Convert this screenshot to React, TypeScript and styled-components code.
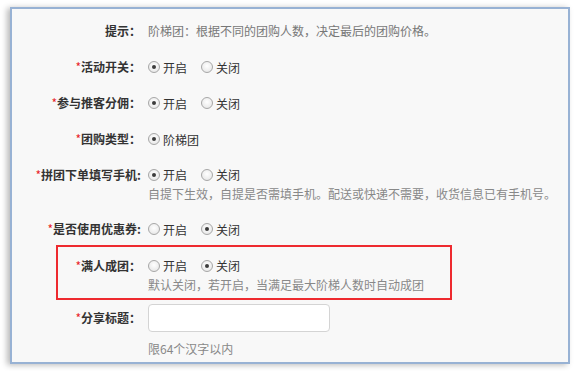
import React from 'react'
import styled, { createGlobalStyle } from 'styled-components'

const GlobalStyle = createGlobalStyle`
  html, body {
    margin: 0;
    padding: 0;
    background: #ffffff;
  }
  body {
    font-family: 'Noto Sans CJK SC', 'Liberation Sans', sans-serif;
    font-size: 12px;
    color: #333;
    text-spacing-trim: space-all;
  }
`

const Page = styled.div`
  padding: 7px 5px 7px 10px;
`

const Panel = styled.div`
  width: 556px;
  background: #f8f8f8;
  border: 2px solid #98b2d4;
  box-shadow: -3px 1px 6px rgba(0, 0, 0, 0.28);
  padding: 12px 0 4px;
  display: flex;
  flex-direction: column;
  gap: 16px;
`

const Row = styled.div<{ $labelWidth?: number }>`
  display: grid;
  grid-template-columns: ${(p) => p.$labelWidth ?? 129}px 1fr;
  column-gap: 7px;
  align-items: start;
`

const Label = styled.div<{ $h?: number }>`
  text-align: right;
  font-weight: 700;
  color: #333;
  line-height: ${(p) => p.$h ?? 20}px;
  white-space: nowrap;
`

const Star = styled.span`
  color: #e8232b;
  font-weight: 400;
`

const Value = styled.div`
  display: flex;
  flex-direction: column;
  line-height: 20px;
`

const Hint = styled.div<{ $gap?: number }>`
  color: #888;
  line-height: 18px;
  margin-top: ${(p) => p.$gap ?? 0}px;
  white-space: nowrap;
`

const Plain = styled.div`
  color: #777;
  line-height: 20px;
`

const Radios = styled.div`
  display: flex;
  align-items: center;
  height: 20px;
  gap: 14px;
`

const Option = styled.label`
  display: flex;
  align-items: center;
  gap: 3px;
  color: #333;
`

const Dot = styled.span<{ $checked?: boolean }>`
  box-sizing: border-box;
  width: 12px;
  height: 12px;
  border-radius: 50%;
  border: 1px solid #a7a7a7;
  background: radial-gradient(circle at 50% 40%, #ffffff 0%, #e2e2e2 100%);
  display: flex;
  align-items: center;
  justify-content: center;
  &::after {
    content: '';
    width: 4px;
    height: 4px;
    border-radius: 50%;
    background: #3c3c3c;
    display: ${(p) => (p.$checked ? 'block' : 'none')};
  }
`

const Highlight = styled.div`
  margin: -10px 0 -12px 44px;
  width: 392px;
  border: 2px solid #ee2a2f;
  padding: 9px 0 4px;
`

const TextInput = styled.input`
  box-sizing: border-box;
  width: 182px;
  height: 28px;
  border: 1px solid #d4d4d4;
  border-radius: 4px;
  background: #fff;
  outline: none;
`

type RadioProps = { options: string[]; checked: number }

const RadioGroup: React.FC<RadioProps> = ({ options, checked }) => (
  <Radios>
    {options.map((o, i) => (
      <Option key={o}>
        <Dot $checked={i === checked} />
        {o}
      </Option>
    ))}
  </Radios>
)

const Req: React.FC<{ text: string }> = ({ text }) => (
  <>
    <Star>*</Star>
    {text}
  </>
)

export default function App() {
  return (
    <>
      <GlobalStyle />
      <Page>
        <Panel>
          <Row>
            <Label>提示：</Label>
            <Plain>阶梯团：根据不同的团购人数，决定最后的团购价格。</Plain>
          </Row>
          <Row>
            <Label><Req text="活动开关：" /></Label>
            <RadioGroup options={['开启', '关闭']} checked={0} />
          </Row>
          <Row>
            <Label><Req text="参与推客分佣：" /></Label>
            <RadioGroup options={['开启', '关闭']} checked={0} />
          </Row>
          <Row>
            <Label><Req text="团购类型：" /></Label>
            <RadioGroup options={['阶梯团']} checked={0} />
          </Row>
          <Row>
            <Label><Req text="拼团下单填写手机:" /></Label>
            <Value>
              <RadioGroup options={['开启', '关闭']} checked={0} />
              <Hint>自提下生效，自提是否需填手机。配送或快递不需要，收货信息已有手机号。</Hint>
            </Value>
          </Row>
          <Row>
            <Label><Req text="是否使用优惠券:" /></Label>
            <RadioGroup options={['开启', '关闭']} checked={1} />
          </Row>
          <Highlight>
            <Row $labelWidth={83}>
              <Label><Req text="满人成团：" /></Label>
              <Value>
                <RadioGroup options={['开启', '关闭']} checked={1} />
                <Hint>默认关闭，若开启，当满足最大阶梯人数时自动成团</Hint>
              </Value>
            </Row>
          </Highlight>
          <Row>
            <Label $h={28}><Req text="分享标题：" /></Label>
            <Value>
              <TextInput type="text" />
              <Hint $gap={8}>限64个汉字以内</Hint>
            </Value>
          </Row>
        </Panel>
      </Page>
    </>
  )
}
